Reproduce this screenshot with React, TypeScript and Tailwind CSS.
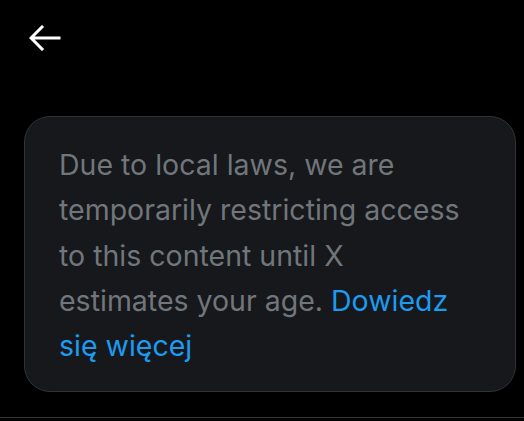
export default function App() {
  return (
    <div
      className="h-[421px] w-[524px] overflow-hidden bg-black flex flex-col"
      style={{ fontFamily: 'Inter, "Noto Sans", sans-serif' }}
    >
      {/* Header */}
      <div className="h-[76px] flex items-center pl-[29px] pb-[1px]">
        <svg width="32" height="26" viewBox="0 0 32 26" fill="none" className="text-white">
          <path d="M30 13H3M13 2L2 13l11 11" stroke="currentColor" strokeWidth="3" strokeLinecap="square" />
        </svg>
      </div>

      {/* Notice card */}
      <div className="mt-[40px] mx-[24px] mr-[8px] h-[276px] rounded-[26px] border border-[#2f3336] bg-[#16181c] pl-[34px] pr-[48px] pt-[25px]">
        <p className="text-[28.5px] leading-[45.3px] text-[#71767b]">
          Due to local laws, we are temporarily restricting access to this content until X estimates your
          age. <span className="text-[#1d9bf0]">Dowiedz się więcej</span>
        </p>
      </div>

      <div className="mt-auto mb-[3px] h-px bg-[#2f3336]" />
    </div>
  );
}
